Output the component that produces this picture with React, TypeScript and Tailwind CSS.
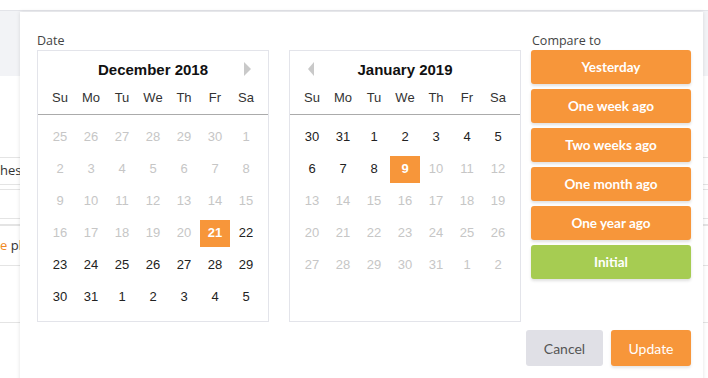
import React from "react";

type Day = { n: number; muted?: boolean; selected?: boolean };

const weekdays = ["Su", "Mo", "Tu", "We", "Th", "Fr", "Sa"];

function range(from: number, to: number, muted = false): Day[] {
  const out: Day[] = [];
  for (let i = from; i <= to; i++) out.push({ n: i, muted });
  return out;
}

const december: Day[] = [
  ...range(25, 30, true),
  ...range(1, 20, true),
  { n: 21, selected: true },
  ...range(22, 31),
  ...range(1, 5),
];

const january: Day[] = [
  ...range(30, 31),
  ...range(1, 8),
  { n: 9, selected: true },
  ...range(10, 31, true),
  ...range(1, 2, true),
];

const compareOptions = ["Yesterday", "One week ago", "Two weeks ago", "One month ago", "One year ago"];

function Calendar({ title, days, arrow }: { title: string; days: Day[]; arrow: "left" | "right" }) {
  return (
    <div className="h-[272px] w-[232px] border border-[#e3e4ea] bg-white font-['Liberation_Sans',Arial,sans-serif]">
      <div className="relative flex h-[38px] items-center justify-center text-[15px] font-bold text-[#111]">
        {title}
        {arrow === "right" ? (
          <span className="absolute right-[17px] top-[11px] h-0 w-0 border-y-[7px] border-l-[7px] border-y-transparent border-l-[#c9c9c9]" />
        ) : (
          <span className="absolute left-[18px] top-[11px] h-0 w-0 border-y-[7px] border-r-[6px] border-y-transparent border-r-[#c9c9c9]" />
        )}
      </div>
      <div className="border-b border-[#ababab] pb-[7px]">
        <div className="grid h-[18px] grid-cols-[repeat(7,31px)] justify-center text-[13px] leading-[18px] text-[#333]">
          {weekdays.map((d) => (
            <div key={d} className="text-center">{d}</div>
          ))}
        </div>
      </div>
      <div className="grid grid-cols-[repeat(7,31px)] justify-center pt-[6px] text-[13px]">
        {days.map((d, i) => (
          <div key={i} className="flex h-[32px] items-center justify-center">
            {d.selected ? (
              <span className="flex h-[27px] w-[30px] items-center justify-center bg-[#f7963a] font-bold text-white">{d.n}</span>
            ) : (
              <span className={d.muted ? "text-[#c6c6c6]" : "text-[#222]"}>{d.n}</span>
            )}
          </div>
        ))}
      </div>
    </div>
  );
}

export default function App() {
  return (
    <div className="relative h-[378px] w-[708px] overflow-hidden bg-white font-['Open_Sans',sans-serif]">
      {/* page behind the popover */}
      <div className="flex flex-col">
        <div className="h-[10px] bg-white" />
        <div className="h-[66px] border-t border-[#e3e4e9] bg-[#f2f3f6]" />
        <div className="h-[81px]" />
        <div className="flex h-[27px] items-center border-t border-[#e4e4e4] text-[13px] text-[#333]">
          <span className="w-[20px] overflow-hidden whitespace-nowrap">hes</span>
        </div>
        <div className="h-[5px] border-t border-[#e4e4e4]" />
        <div className="h-[29px] border-t border-[#e4e4e4]" />
        <div className="h-[6px] border-t border-[#e4e4e4]" />
        <div className="flex h-[41px] items-center border-t-2 border-[#e4e4e4] text-[13px] text-[#333]">
          <span className="w-[20px] overflow-hidden whitespace-nowrap"><span className="text-[#f08a24]">e</span> pl</span>
        </div>
        <div className="h-[57px] border-t border-[#e4e4e4]" />
        <div className="border-t border-[#e4e4e4]" />
      </div>

      {/* date popover */}
      <div className="absolute left-[20px] top-[12px] h-[380px] w-[683px] bg-white pl-[17px] pr-[12px] pt-[20px] shadow-[0_0_4px_rgba(0,0,0,0.12)]">
        <div className="flex">
          <div className="w-[484px]">
            <div className="h-[18px] text-[12.5px] leading-[18px] text-[#444]">Date</div>
            <div className="flex gap-[20px]">
              <Calendar title="December 2018" days={december} arrow="right" />
              <Calendar title="January 2019" days={january} arrow="left" />
            </div>
          </div>
          <div className="ml-[10px] w-[160px]">
            <div className="h-[18px] pl-[1px] text-[12.5px] leading-[18px] text-[#444]">Compare to</div>
            <div className="flex flex-col gap-[5px] font-['Lato',sans-serif] text-[13.5px] font-bold text-white">
              {compareOptions.map((label) => (
                <button key={label} className="h-[34px] rounded-[3px] bg-[#f7963a] shadow-[0_2px_3px_rgba(0,0,0,0.12)]">
                  {label}
                </button>
              ))}
              <button className="h-[34px] rounded-[3px] bg-[#a6cc52] shadow-[0_2px_3px_rgba(0,0,0,0.12)]">Initial</button>
            </div>
          </div>
        </div>
        <div className="mt-[8px] flex justify-end gap-[8px] font-['Lato',sans-serif] text-[14px]">
          <button className="h-[36px] w-[77px] rounded-[3px] bg-[#e0e0e6] text-[#555]">Cancel</button>
          <button className="h-[36px] w-[80px] rounded-[3px] bg-[#f7963a] text-white shadow-[0_2px_3px_rgba(0,0,0,0.1)]">Update</button>
        </div>
      </div>
    </div>
  );
}
